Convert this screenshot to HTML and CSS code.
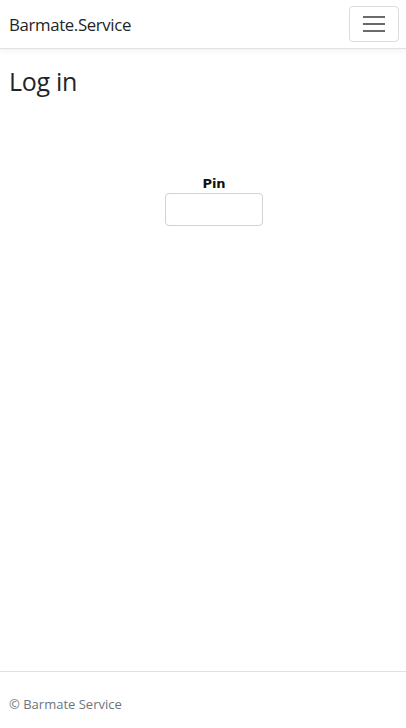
FILE: index.html
```html
<!DOCTYPE html>
<html lang="en">
<head>
<meta charset="utf-8">
<title>Log in - Barmate.Service</title>
<link rel="stylesheet" href="styles.css">
</head>
<body>
<div class="page">
  <header class="navbar">
    <a class="brand" href="#">Barmate.Service</a>
    <button class="toggler" type="button" aria-label="Toggle navigation">
      <svg width="22" height="18" viewBox="0 0 22 18"><path d="M0 2h22M0 9h22M0 16h22" stroke="#6a6a6a" stroke-width="2"/></svg>
    </button>
  </header>
  <main class="main">
    <h1 class="title">Log in</h1>
    <form class="pin-form">
      <label class="pin-label" for="pin">Pin</label>
      <input class="pin-input" id="pin" type="password">
    </form>
  </main>
  <footer class="footer">© Barmate Service</footer>
</div>
</body>
</html>
```
FILE: styles.css
```css
* { box-sizing: border-box; }
html, body { margin: 0; padding: 0; }
body {
  font-family: "Open Sans", "Noto Sans", sans-serif;
  color: #212529;
  background: #fff;
}
.page {
  height: 728px;
  display: flex;
  flex-direction: column;
}
.navbar {
  height: 49px;
  display: flex;
  align-items: center;
  justify-content: space-between;
  padding: 0 7px 0 9px;
  border-bottom: 1px solid #dee2e6;
  box-shadow: 0 2px 6px rgba(0,0,0,0.05);
}
.brand {
  font-size: 16.8px;
  color: #212529;
  text-decoration: none;
  letter-spacing: -0.35px;
  margin-top: 1px;
}
.toggler {
  width: 50px;
  height: 36px;
  margin-top: 0;
  border: 1px solid #dcdcdc;
  border-radius: 4px;
  background: #fff;
  display: flex;
  align-items: center;
  justify-content: center;
  padding: 0;
}
.main {
  flex: 1;
  padding: 0 9px;
}
.title {
  margin: 16px 0 0;
  font-size: 25px;
  font-weight: 400;
  line-height: 32px;
  letter-spacing: -0.3px;
}
.pin-form {
  display: flex;
  flex-direction: column;
  align-items: center;
  margin: 79px 0 0 22px;
}
.pin-label {
  font-family: "DejaVu Sans", sans-serif;
  font-weight: bold;
  font-size: 13px;
  color: #111;
  line-height: 16px;
  margin-bottom: 1px;
}
.pin-input {
  width: 98px;
  height: 33px;
  border: 1px solid #ced4da;
  border-radius: 4px;
  background: #fff;
}
.footer {
  height: 57px;
  border-top: 1px solid #dee2e6;
  padding: 23px 9px 0;
  font-size: 13px;
  color: #6c757d;
}
```
